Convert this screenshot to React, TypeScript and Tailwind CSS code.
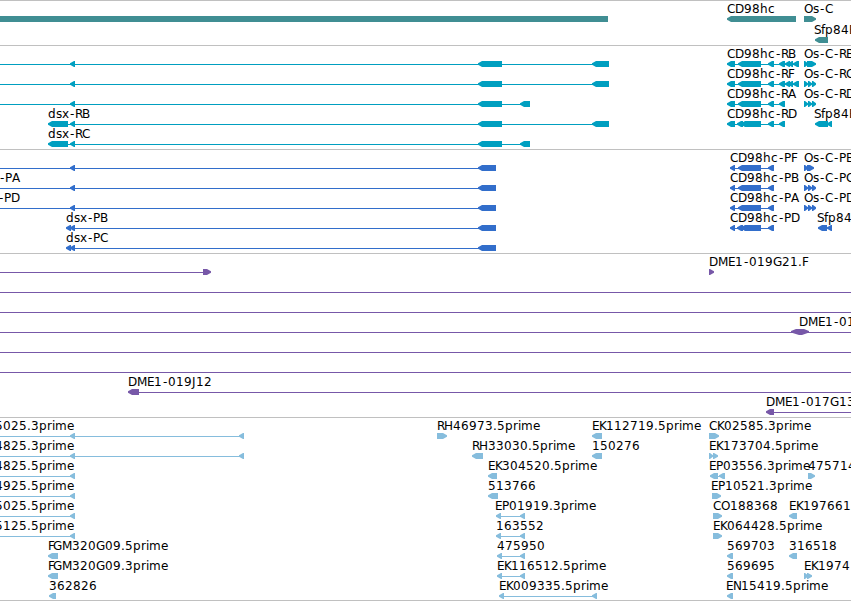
type Dir = "left" | "right" | "both" | "flat"

interface Feature {
  label?: string
  labelX?: number
  dir?: Dir
  // intron line, start and end
  line?: [number, number]
  exons?: [number, number][]
}

interface Track {
  name: string
  color: string
  pitch: number
  height: string
  rows: Feature[][]
}

const WIDTH = 851
const FIRST_ROW = 15

const ADVANCES: Record<string, number> = {
  A: 8, B: 8, C: 8, D: 9, E: 7, F: 5, G: 9, H: 9, J: 4, K: 7, M: 10, N: 8, O: 9, P: 7, R: 7, S: 7,
  "-": 6, ".": 4, c: 7, d: 8, e: 7, f: 4, h: 8, i: 3, m: 12, p: 8, r: 5, s: 6, x: 7,
}

const dsxTail: [number, number][] = [[70, 75], [478, 502]]
const cdShort: [number, number][] = [[727, 735], [738, 761], [768, 774], [779, 785]]
const cdSplit: [number, number][] = [[727, 735], [737, 743], [741, 761], [768, 774], [779, 785]]
const cdLong: [number, number][] = [...cdShort, [785, 790], [788, 793], [793, 799]]
const cdProtein: [number, number][] = [[730, 735], [738, 761], [768, 774]]
const cdProteinSplit: [number, number][] = [[730, 735], [737, 743], [741, 761], [768, 774]]
const osExons: [number, number][] = [[804, 808], [808, 812], [812, 816]]

const cd = (label: string, exons: [number, number][]): Feature => ({
  label, exons, line: [exons[0][0] + 3, exons[exons.length - 1][1]],
})

const os = (label: string, exons = osExons): Feature => ({ label, exons, dir: "right" })

const prime = (label: string, end = 75): Feature => ({
  label,
  labelX: -5,
  line: [0, end - 2],
  exons: end > 75 ? [[70, 75], [end - 5, end]] : [[70, 75]],
})

const tracks: Track[] = [
  {
    name: "Genes",
    color: "#408e93",
    pitch: 21,
    height: "h-[45px]",
    rows: [
      [
        { dir: "flat", exons: [[0, 608]] },
        { label: "CD98hc", exons: [[727, 796]] },
        { label: "Os-C", dir: "right", exons: [[804, 816]] },
      ],
      [{ label: "Sfp84E", labelX: 814, exons: [[815, 828]] }],
    ],
  },
  {
    name: "Transcripts",
    color: "#009fc0",
    pitch: 20,
    height: "h-[104px]",
    rows: [
      [
        { line: [0, 600], exons: [...dsxTail, [592, 609]] },
        cd("CD98hc-RB", cdLong),
        os("Os-C-RB", [[804, 808], [807, 816]]),
      ],
      [
        { line: [0, 600], exons: [...dsxTail, [592, 609]] },
        cd("CD98hc-RF", cdLong),
        os("Os-C-RC"),
      ],
      [
        { line: [0, 525], exons: [...dsxTail, [520, 530]] },
        cd("CD98hc-RA", cdShort),
        os("Os-C-RD"),
      ],
      [
        { label: "dsx-RB", line: [60, 600], exons: [[48, 68], ...dsxTail, [592, 609]] },
        cd("CD98hc-RD", cdSplit),
        { label: "Sfp84E", labelX: 814, exons: [[815, 828], [827, 832]] },
      ],
      [{ label: "dsx-RC", line: [60, 525], exons: [[48, 68], ...dsxTail, [520, 530]] }],
    ],
  },
  {
    name: "Proteins",
    color: "#326ecb",
    pitch: 20,
    height: "h-[104px]",
    rows: [
      [
        { line: [0, 490], exons: [[70, 75], [478, 496]] },
        cd("CD98hc-PF", cdProtein),
        os("Os-C-PB", [[804, 808], [807, 814]]),
      ],
      [
        { label: "-PA", labelX: -1, line: [0, 490], exons: [[70, 75], [478, 496]] },
        cd("CD98hc-PB", cdProtein),
        os("Os-C-PC"),
      ],
      [
        { label: "-PD", labelX: -2, line: [0, 490], exons: [[70, 75], [478, 496]] },
        cd("CD98hc-PA", cdProtein),
        os("Os-C-PD"),
      ],
      [
        { label: "dsx-PB", line: [70, 490], exons: [[66, 71], [70, 75], [478, 496]] },
        cd("CD98hc-PD", cdProteinSplit),
        { label: "Sfp84E", labelX: 817, exons: [[818, 827], [827, 832]] },
      ],
      [{ label: "dsx-PC", line: [70, 490], exons: [[66, 71], [70, 75], [478, 496]] }],
    ],
  },
  {
    name: "BACs",
    color: "#7758a8",
    pitch: 20,
    height: "h-[164px]",
    rows: [
      [
        { dir: "right", line: [0, 205], exons: [[203, 211]] },
        { label: "DME1-019G21.F", dir: "right", exons: [[709, 714]] },
      ],
      [{ line: [0, WIDTH] }],
      [{ line: [0, WIDTH] }],
      [{ label: "DME1-01", labelX: 799, dir: "both", line: [0, WIDTH], exons: [[791, 809]] }],
      [{ line: [0, WIDTH] }],
      [{ line: [0, WIDTH] }],
      [{ label: "DME1-019J12", line: [132, WIDTH], exons: [[128, 139]] }],
      [{ label: "DME1-017G13", line: [770, WIDTH], exons: [[766, 774]] }],
    ],
  },
  {
    name: "ESTs",
    color: "#86bddd",
    pitch: 20,
    height: "h-[183px]",
    rows: [
      [
        prime("5025.3prime", 244),
        { label: "RH46973.5prime", dir: "right", exons: [[437, 447]] },
        { label: "EK112719.5prime", exons: [[592, 602]] },
        { label: "CK02585.3prime", dir: "right", exons: [[709, 719]] },
      ],
      [
        prime("4825.3prime", 244),
        { label: "RH33030.5prime", exons: [[472, 483]] },
        { label: "150276", exons: [[592, 602]] },
        { label: "EK173704.5prime", dir: "right", exons: [[709, 713], [713, 718]] },
      ],
      [
        prime("4825.5prime"),
        { label: "EK304520.5prime", exons: [[488, 497]] },
        { label: "EP03556.3prime", labelX: 709, exons: [[710, 718], [719, 725]], line: [714, 722] },
        { label: "475714", dir: "right", exons: [[808, 815]] },
      ],
      [
        prime("4925.5prime"),
        { label: "513766", exons: [[488, 498]] },
        { label: "EP10521.3prime", labelX: 711, dir: "right", exons: [[712, 721]] },
      ],
      [
        prime("5025.5prime"),
        { label: "EP01919.3prime", labelX: 495, line: [499, 522], exons: [[496, 501], [520, 525]] },
        { label: "CO188368", dir: "right", exons: [[713, 722]] },
        { label: "EK197661", exons: [[789, 797]] },
      ],
      [
        prime("5125.5prime"),
        { label: "163552", line: [499, 522], exons: [[496, 501], [520, 525]] },
        { label: "EK064428.5prime", dir: "right", exons: [[713, 722]] },
      ],
      [
        { label: "FGM320G09.5prime", exons: [[48, 58]] },
        { label: "475950", line: [500, 522], exons: [[497, 502], [520, 525]] },
        { label: "569703", exons: [[727, 733]] },
        { label: "316518", exons: [[789, 797]] },
      ],
      [
        { label: "FGM320G09.3prime", exons: [[48, 58]] },
        { label: "EK116512.5prime", line: [500, 522], exons: [[497, 502], [520, 525]] },
        { label: "569695", exons: [[727, 733]] },
        { label: "EK1974", dir: "right", exons: [[804, 808], [807, 812]] },
      ],
      [
        { label: "362826", exons: [[49, 56]] },
        { label: "EK009335.5prime", line: [502, 595], exons: [[499, 504], [592, 597]] },
        { label: "EN15419.5prime", labelX: 726, exons: [[727, 733]] },
      ],
    ],
  },
]

// One x per character, so every glyph sits on a whole pixel
function glyphPositions(text: string, start: number): string {
  let x = start
  return Array.from(text)
    .map((char) => {
      // hyphens are centred in their wider cell
      const current = char === "-" ? x + 1 : x
      x += ADVANCES[char] ?? 8
      return current
    })
    .join(" ")
}

function exonPoints([start, end]: [number, number], y: number, dir: Dir): string {
  const tip = Math.min(5, end - start)
  if (dir === "flat") {
    return `${start},${y} ${end},${y} ${end},${y + 6} ${start},${y + 6}`
  }
  if (dir === "both") {
    return `${start},${y + 2} ${start + 5},${y} ${end - 5},${y} ${end},${y + 2} ${end},${y + 3.5} ${end - 7},${y + 6} ${start + 8},${y + 6} ${start},${y + 3.5}`
  }
  if (dir === "right") {
    return `${start},${y} ${end - tip + 1},${y} ${end},${y + 2.2} ${end},${y + 3.8} ${end - tip + 1},${y + 6} ${start},${y + 6}`
  }
  return `${start},${y + 2.2} ${start + tip - 1},${y} ${end},${y} ${end},${y + 6} ${start + tip - 1},${y + 6} ${start},${y + 3.8}`
}

function FeatureGlyph({ feature, y }: { feature: Feature; y: number }) {
  const { label, line, exons = [], dir = "left" } = feature
  const labelX = feature.labelX ?? exons[0]?.[0] ?? 0

  return (
    <g>
      {line && <rect x={line[0]} y={y + 3} width={line[1] - line[0]} height={1} />}
      {exons.map((exon, i) => (
        <polygon key={i} points={exonPoints(exon, y, dir)} />
      ))}
      {label && (
        <text x={glyphPositions(label, labelX)} y={y - 3} className="fill-black">
          {label}
        </text>
      )}
    </g>
  )
}

function TrackPanel({ track }: { track: Track }) {
  return (
    <section aria-label={track.name} className={`box-border w-full border-b border-[#c0c0c0] ${track.height}`}>
      <svg width={WIDTH} height="100%" fill={track.color} className="block overflow-hidden">
        {track.rows.map((row, r) =>
          row.map((feature, i) => (
            <FeatureGlyph key={`${r}-${i}`} feature={feature} y={FIRST_ROW + r * track.pitch} />
          ))
        )}
      </svg>
    </section>
  )
}

export default function App() {
  return (
    <main className="flex h-[601px] w-[851px] flex-col overflow-hidden border-t border-[#c0c0c0] bg-white font-['DejaVu_Sans',sans-serif] text-[12px]">
      {tracks.map((track) => (
        <TrackPanel key={track.name} track={track} />
      ))}
    </main>
  )
}
